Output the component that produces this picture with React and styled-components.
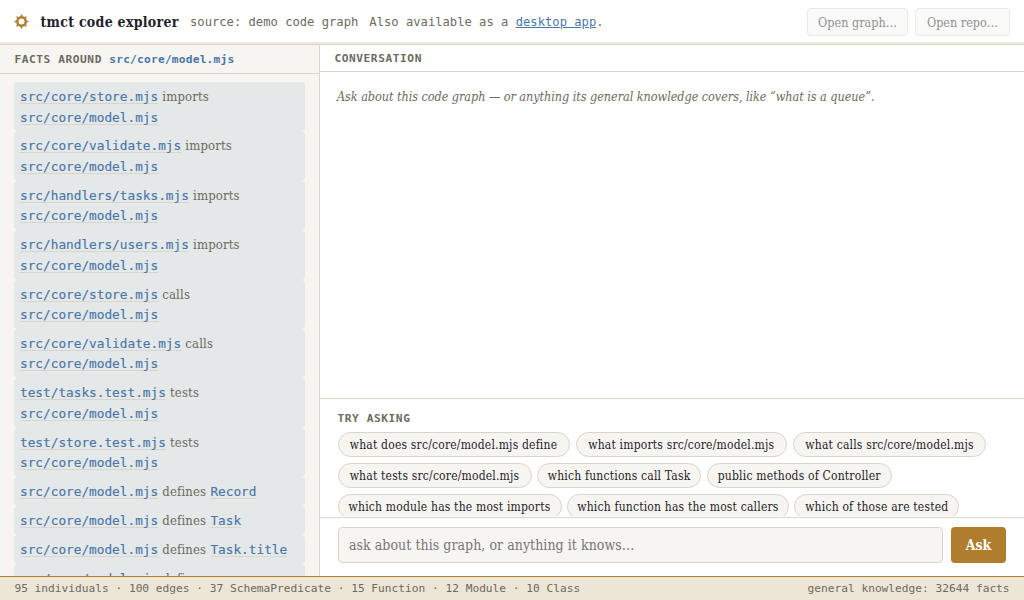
import React from "react";
import styled, { createGlobalStyle, css } from "styled-components";

const serif = `Charter, "Bitstream Charter", "DejaVu Serif Condensed", "Liberation Serif", serif`;
const mono = `"DejaVu Sans Mono", "Liberation Mono", monospace`;
const line = "#d9d5c9";
const muted = "#6b6b60";
const blue = "#4a76a8";
const amber = "#b07d2e";

const Global = createGlobalStyle`
  * { box-sizing: border-box; }
  body { margin: 0; background: #fff; font-family: ${serif}; color: #1f2328; }
`;
const Page = styled.div`
  width: 100vw;
  height: 100vh;
  display: flex;
  flex-direction: column;
  overflow: hidden;
`;
const Header = styled.header`
  height: 45px;
  flex: none;
  display: flex;
  align-items: center;
  padding: 0 14px 1px;
  border-bottom: 1px solid ${line};
  box-shadow: inset 0 -2px 0 #f1e9db;
  white-space: nowrap;
`;
const Gear = styled.svg`
  width: 15px;
  height: 15px;
  margin-right: 11px;
`;
const Title = styled.h1`
  margin: 0;
  width: 150px;
  padding-left: 0.5px;
  font-size: 14px;
  font-weight: 700;
  letter-spacing: 0.28px;
`;
const Meta = styled.span`
  font: 12.16px ${mono};
  color: ${muted};
  margin-right: 11px;
`;
const Anchor = styled.a`
  color: ${blue};
  text-decoration: underline;
`;
const Actions = styled.div`
  margin-left: auto;
  display: flex;
  gap: 7px;
`;
const OpenButton = styled.button`
  width: ${(p) => p.$w}px;
  height: 28px;
  padding: 2px 0 0;
  border: 1px solid #ebe9e3;
  border-radius: 4px;
  background: #fafaf9;
  color: #8f9193;
  font: 12.5px ${serif};
  white-space: nowrap;
`;
const Body = styled.div`
  flex: 1;
  min-height: 0;
  display: flex;
`;
const Facts = styled.aside`
  width: 320px;
  flex: none;
  display: flex;
  flex-direction: column;
  background: #f7f5f1;
  border-right: 1px solid ${line};
`;
const PanelHead = styled.h2`
  margin: 0;
  flex: none;
  height: ${(p) => p.$h}px;
  padding: 1px 14.4px 0;
  border-bottom: 1px solid ${line};
  font: 700 11.2px/${(p) => p.$h - 2}px ${mono};
  letter-spacing: 0.56px;
  color: ${muted};
  white-space: pre;
`;
const HeadTarget = styled.span`
  color: ${blue};
  letter-spacing: 0.22px;
`;
const FactList = styled.div`
  flex: 1;
  min-height: 0;
  overflow: hidden;
  padding: 8px 14px;
`;
const Fact = styled.div`
  padding: 5px 6px 3.4px;
  border-radius: 4px;
  background: #e4e8e9;
  font-size: 13px;
  line-height: 20.5px;
  letter-spacing: 0.15px;
  word-spacing: 0.25px;
  color: ${muted};
`;
const Node = styled.span`
  font: 12.75px/15px ${mono};
  letter-spacing: 0;
  word-spacing: 0;
  color: ${blue};
  -webkit-text-stroke: 0.15px ${blue};
  text-decoration: underline 1px ${line};
  text-underline-offset: 2px;
  text-decoration-skip-ink: none;
`;
const Chat = styled.main`
  flex: 1;
  min-width: 0;
  display: flex;
  flex-direction: column;
`;
const Log = styled.div`
  flex: 1;
  min-height: 0;
  padding: 14px 17px;
`;
const Hint = styled.p`
  margin: 0;
  font-size: 12.5px;
  line-height: 22px;
  font-style: italic;
  letter-spacing: -0.03px;
  color: ${muted};
  white-space: nowrap;
`;
const Suggestions = styled.section`
  height: 119px;
  flex: none;
  padding: 12px 17.5px 1px;
  border-top: 1px solid ${line};
`;
const SuggestClip = styled.div`
  height: 105px;
  overflow: hidden;
`;
const SuggestTitle = styled.h3`
  margin: 0 0 6px;
  font: 700 11.2px/15px ${mono};
  letter-spacing: 0.56px;
  color: ${muted};
`;
const PillRow = styled.div`
  display: flex;
  gap: ${(p) => p.$gap}px;
  margin-bottom: 6px;
`;
const Pill = styled.button`
  width: ${(p) => p.$w}px;
  height: 25px;
  padding: 0;
  flex: none;
  border: 1px solid ${line};
  border-radius: 13px;
  background: #f7f5f1;
  color: #1f2328;
  font: 12px ${serif};
  letter-spacing: 0.19px;
  white-space: nowrap;
`;
const AskBar = styled.form`
  height: 59px;
  flex: none;
  display: flex;
  gap: 8px;
  padding: 9px 18px 0;
  border-top: 1px solid ${line};
`;
const fieldText = css`
  font-family: ${serif};
  font-size: 14px;
`;
const Field = styled.input`
  flex: 1;
  height: 36px;
  padding: 0 10px;
  border: 1px solid ${line};
  border-radius: 4px;
  background: #f7f5f1;
  ${fieldText}
  letter-spacing: 0.05px;
  &::placeholder { color: #757575; }
`;
const AskButton = styled.button`
  width: 55px;
  height: 36px;
  border: 0;
  border-radius: 4px;
  background: ${amber};
  color: #fff;
  ${fieldText}
  font-weight: 700;
`;
const Status = styled.footer`
  height: 24px;
  flex: none;
  display: flex;
  justify-content: space-between;
  padding: 0 14.4px;
  border-top: 1px solid ${amber};
  background: #ede5d6;
  color: ${muted};
  font: 11.2px/23px ${mono};
`;

const model = "src/core/model.mjs";
const facts = [
  ["src/core/store.mjs", "imports", model],
  ["src/core/validate.mjs", "imports", model],
  ["src/handlers/tasks.mjs", "imports", model],
  ["src/handlers/users.mjs", "imports", model],
  ["src/core/store.mjs", "calls", model],
  ["src/core/validate.mjs", "calls", model],
  ["test/tasks.test.mjs", "tests", model],
  ["test/store.test.mjs", "tests", model],
  [model, "defines", "Record"],
  [model, "defines", "Task"],
  [model, "defines", "Task.title"],
  [model, "defines"],
];
const rows = [
  { gap: 6.2, pills: [["what does src/core/model.mjs define", 232], ["what imports src/core/model.mjs", 211.2], ["what calls src/core/model.mjs", 193]] },
  { gap: 5.6, pills: [["what tests src/core/model.mjs", 194], ["which functions call Task", 164], ["public methods of Controller", 185]] },
  { gap: 5.4, pills: [["which module has the most imports", 224], ["which function has the most callers", 222], ["which of those are tested", 165]] },
];

export default function App() {
  return (
    <Page>
      <Global />
      <Header>
        <Gear viewBox="-7.5 -7.5 15 15" fill="none" stroke={amber}>
          <circle r="4.2" strokeWidth="2.4" />
          {[0, 45, 90, 135, 180, 225, 270, 315].map((a) => (
            <path key={a} d="M-1.5 -5L0 -7.4L1.5 -5Z" fill={amber} stroke="none" transform={`rotate(${a})`} />
          ))}
        </Gear>
        <Title>tmct code explorer</Title>
        <Meta>source: demo code graph</Meta>
        <Meta>Also available as a <Anchor>desktop app</Anchor>.</Meta>
        <Actions>
          <OpenButton $w={101}>Open graph…</OpenButton>
          <OpenButton $w={95}>Open repo…</OpenButton>
        </Actions>
      </Header>
      <Body>
        <Facts>
          <PanelHead $h={29}>FACTS AROUND <HeadTarget>{model}</HeadTarget></PanelHead>
          <FactList>
            {facts.map(([a, verb, b], i) => (
              <Fact key={i}><Node>{a}</Node> {verb} {b && <Node>{b}</Node>}</Fact>
            ))}
          </FactList>
        </Facts>
        <Chat>
          <PanelHead $h={27}>CONVERSATION</PanelHead>
          <Log>
            <Hint>Ask about this code graph — or anything its general knowledge covers, like “what is a queue”.</Hint>
          </Log>
          <Suggestions>
            <SuggestClip>
              <SuggestTitle>TRY ASKING</SuggestTitle>
              {rows.map((row, i) => (
                <PillRow key={i} $gap={row.gap}>
                  {row.pills.map(([text, w]) => <Pill key={text} $w={w}>{text}</Pill>)}
                </PillRow>
              ))}
            </SuggestClip>
          </Suggestions>
          <AskBar>
            <Field placeholder="ask about this graph, or anything it knows…" />
            <AskButton type="button">Ask</AskButton>
          </AskBar>
        </Chat>
      </Body>
      <Status>
        <span>95 individuals · 100 edges · 37 SchemaPredicate · 15 Function · 12 Module · 10 Class</span>
        <span>general knowledge: 32644 facts</span>
      </Status>
    </Page>
  );
}
